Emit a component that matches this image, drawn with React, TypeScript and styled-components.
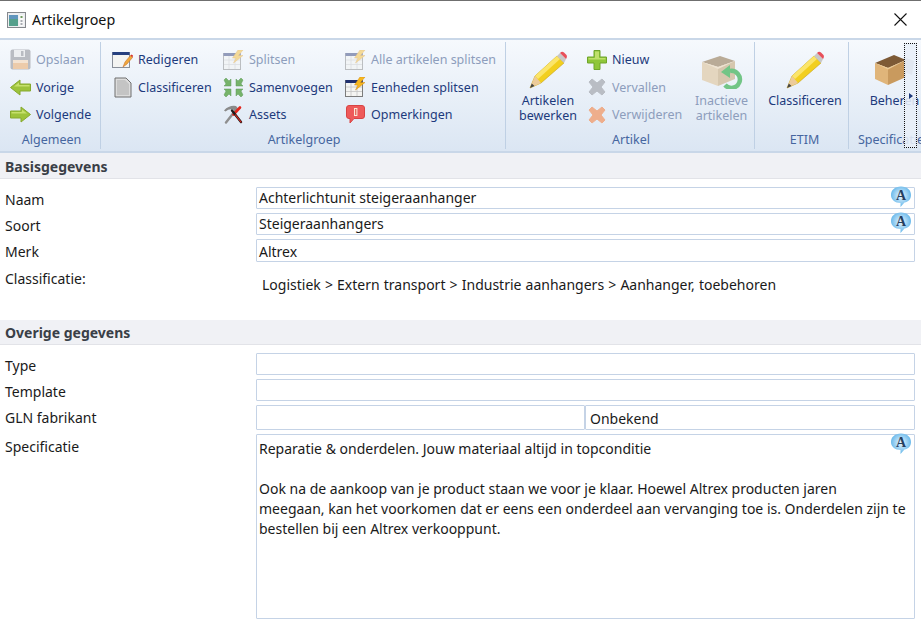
import React from "react"
import styled, { createGlobalStyle } from "styled-components"

const Global = createGlobalStyle`
    html, body { margin: 0; padding: 0; background: #fff; }
    body { font-family: "Noto Sans", "Open Sans", "Liberation Sans", sans-serif; overflow: hidden; }
`

const Window = styled.div`
    width: 921px;
    height: 620px;
    display: flex;
    flex-direction: column;
    overflow: hidden;
    background: #fff;
    border-top: 1px solid #6f6f6f;
    box-sizing: border-box;
`
const TitleBar = styled.div`
    height: 37px;
    flex: none;
    display: flex;
    align-items: center;
    padding: 0 14px 0 7px;
    gap: 6px;
    color: #111;
    font-size: 14.3px;
`
const TitleText = styled.span`
    flex: 1;
`
const Ribbon = styled.div`
    position: relative;
    height: 115px;
    flex: none;
    box-sizing: border-box;
    display: flex;
    gap: 2px;
    padding: 2px 0 2px 3px;
    overflow: hidden;
    border-top: 2px solid #c9d7e8;
    border-bottom: 2px solid #c9d7e8;
    background: linear-gradient(#f6f9fd, #dbe6f3);
`
const Group = styled.div<{ $w: number }>`
    width: ${p => p.$w}px;
    flex: none;
    display: flex;
    flex-direction: column;
    border-right: 1px solid #bfd0e4;
    box-sizing: border-box;
`
const GroupBody = styled.div`
    height: 89px;
    flex: none;
    display: flex;
    padding-top: 4px;
    box-sizing: border-box;
`
const GroupLabel = styled.div<{ $shift?: number }>`
    height: 18px;
    line-height: 18px;
    padding-left: ${p => p.$shift ?? 0}px;
    text-align: center;
    font-size: 12.5px;
    color: #46669f;
    white-space: nowrap;
`
const Column = styled.div<{ $w: number; $left?: number }>`
    width: ${p => p.$w}px;
    margin-left: ${p => p.$left ?? 0}px;
    flex: none;
    display: flex;
    flex-direction: column;
`
const SmallButton = styled.div<{ $off?: boolean }>`
    height: 27.5px;
    display: grid;
    grid-template-columns: 21px auto;
    justify-items: start;
    align-items: center;
    column-gap: 5px;
    font-size: 12.5px;
    white-space: nowrap;
    color: ${p => (p.$off ? "#8d9dbc" : "#1d3a7c")};
    svg { justify-self: center; }
`
const LargeButton = styled.div<{ $w: number; $left: number; $off?: boolean }>`
    width: ${p => p.$w}px;
    margin-left: ${p => p.$left}px;
    flex: none;
    display: flex;
    flex-direction: column;
    align-items: center;
    font-size: 12.5px;
    line-height: 15px;
    text-align: center;
    white-space: nowrap;
    color: ${p => (p.$off ? "#8d9dbc" : "#1d3a7c")};
`
const LargeIcon = styled.div`
    height: 47px;
    flex: none;
    display: flex;
    align-items: center;
    justify-content: center;
`
const OverflowGrip = styled.div`
    position: absolute;
    top: 3px;
    right: 4px;
    width: 13px;
    height: 105px;
    box-sizing: border-box;
    border: 1px dotted #111;
    background: rgba(232, 239, 248, 0.88);
    display: flex;
    align-items: center;
    justify-content: center;
`
const GripArrow = styled.div`
    width: 0;
    height: 0;
    border-top: 3px solid transparent;
    border-bottom: 3px solid transparent;
    border-left: 4px solid #1d3a7c;
    margin-left: 1px;
`
const SectionHeader = styled.div<{ $h: number }>`
    flex: none;
    height: ${p => p.$h}px;
    line-height: ${p => p.$h + 1}px;
    box-sizing: border-box;
    padding-left: 5px;
    font-size: 14px;
    font-weight: 700;
    color: #3a3f47;
    background: #f0f1f5;
    border-bottom: 1px solid #e2e3e8;
`
const Form = styled.div<{ $h: number }>`
    flex: none;
    height: ${p => p.$h}px;
    box-sizing: border-box;
    padding: 8px 6px 0 5px;
    display: grid;
    grid-template-columns: 251px 1fr;
    align-content: start;
    row-gap: 4px;
    font-size: 14px;
    color: #1a1a1a;
`
const Label = styled.div`
    height: 22px;
    line-height: 26px;
`
const Field = styled.div<{ $h?: number }>`
    position: relative;
    height: ${p => p.$h ?? 22}px;
    line-height: ${p => (p.$h ?? 22) - 2}px;
    box-sizing: border-box;
    border: 1px solid #c5d3e6;
    border-radius: 1px;
    padding: 0 2px;
    white-space: nowrap;
`
const MerkField = styled(Field)`
    line-height: 23px;
`
const SplitField = styled.div`
    display: grid;
    grid-template-columns: 329px 1fr;
`
const UnknownField = styled(Field)`
    padding-left: 4px;
    line-height: 25px;
`
const Classification = styled.div`
    padding: 8px 0 0 6px;
    line-height: 22px;
    height: 30px;
    word-spacing: 0.5px;
`
const MemoField = styled(Field)`
    white-space: normal;
    line-height: 20px;
    padding: 4px 2px;
`
const MemoLine = styled.div`
    min-height: 20px;
    white-space: nowrap;
`
const Translate = styled.div`
    position: absolute;
    top: -2px;
    right: 2px;
    width: 22px;
    height: 22px;
`
const CloseButton = styled.svg`
    width: 13px;
    height: 13px;
    display: block;
`

const FloppyIcon = () => (
    <svg width="21" height="21" viewBox="0 0 21 21">
        <rect x="0.5" y="0.5" width="20" height="20" rx="2" fill="#b9bcc2" />
        <rect x="4" y="1" width="11" height="7" fill="#eceef0" />
        <rect x="11" y="2" width="2.5" height="5" fill="#b9bcc2" />
        <rect x="3" y="11" width="15" height="9" fill="#eccbaa" />
        <rect x="3" y="11" width="15" height="3" fill="#f3e3d2" />
    </svg>
)
const ArrowIcon = ({ dir }: { dir: "left" | "right" }) => (
    <svg width="21" height="17" viewBox="0 0 21 17" style={dir === "left" ? { transform: "scaleX(-1)" } : undefined}>
        <path d="M0.5 5 H11 V1 L20.5 8.5 L11 16 V12 H0.5 Z" fill="#9dc33b" stroke="#86a92e" strokeWidth="1" strokeLinejoin="round" />
        <path d="M1.5 6 H12 V3.5 L17 7.5 H1.5 Z" fill="#c6e06c" />
    </svg>
)
const FormIcon = () => (
    <svg width="21" height="19" viewBox="0 0 21 19">
        <rect x="0.5" y="2.5" width="17" height="15" fill="#f4f4f2" stroke="#8a8f99" />
        <rect x="0.5" y="2" width="17" height="3" fill="#27407f" />
        <path d="M11 17 L13 12 L18.5 5.5 L20.5 7.5 L15 14 Z" fill="#f0a83c" stroke="#c9722a" strokeWidth="0.6" />
        <path d="M18.5 5.5 L20.5 7.5 L21 5.5 L19.5 4.5 Z" fill="#d8352e" />
    </svg>
)
const PageIcon = () => (
    <svg width="18" height="21" viewBox="0 0 18 21">
        <path d="M1 1 H12 L17 6 V20 H1 Z" fill="#dcdcdc" stroke="#6f6f6f" />
        <path d="M3 3 H11 L15 7 V18 H3 Z" fill="#c4c4c4" />
    </svg>
)
const SplitIcon = ({ off }: { off?: boolean }) => (
    <svg width="21" height="20" viewBox="0 0 21 20" opacity={off ? 0.45 : 1}>
        <rect x="0.5" y="3.5" width="17" height="16" fill="#f4f4f2" stroke="#7c7c7c" />
        <rect x="0.5" y="3" width="17" height="3" fill="#1f2f6e" />
        <path d="M1 10 H17 M1 14.5 H17 M6 6 V19 M12 6 V19" stroke="#c4c4c4" strokeWidth="0.8" />
        <path d="M15 0 L9.5 8 H13 L10.5 13 L20 5.5 H15.5 L20 0 Z" fill="#f6b71e" stroke="#d98d10" strokeWidth="0.5" />
    </svg>
)
const MergeIcon = () => (
    <svg width="21" height="21" viewBox="0 0 21 21" fill="#76b36a" stroke="#5c9a58" strokeWidth="0.5">
        <path d="M1 3 L3 1 L6 4 L8 2 V9 H1 L3 7 Z" />
        <path d="M20 3 L18 1 L15 4 L13 2 V9 H20 L18 7 Z" />
        <path d="M1 18 L3 20 L6 17 L8 19 V12 H1 L3 14 Z" />
        <path d="M20 18 L18 20 L15 17 L13 19 V12 H20 L18 14 Z" />
    </svg>
)
const ToolsIcon = () => (
    <svg width="21" height="19" viewBox="0 0 21 19">
        <path d="M3 17.5 L12 6" stroke="#8f8f8f" strokeWidth="2.4" strokeLinecap="round" />
        <path d="M1 5.5 Q6 0 13 1 L15.5 4 L13 7 L10 4.5 Q6 3.5 2.5 6.5 Z" fill="#8a8a8a" />
        <path d="M17 2.5 L10.5 9.5" stroke="#e2261c" strokeWidth="2.6" strokeLinecap="round" />
        <path d="M9 5.5 L18 17" stroke="#1c1c1c" strokeWidth="2.4" strokeLinecap="round" />
        <path d="M12.5 10 L18 17" stroke="#e2261c" strokeWidth="1.2" strokeLinecap="round" />
    </svg>
)
const NoteIcon = () => (
    <svg width="19" height="20" viewBox="0 0 19 20">
        <path d="M3 0.5 H16 Q18.5 0.5 18.5 3 V11 Q18.5 13.5 16 13.5 H8 L4 18 V13.5 H3 Q0.5 13.5 0.5 11 V3 Q0.5 0.5 3 0.5 Z" fill="#ee5a5a" stroke="#d84444" />
        <rect x="8" y="3" width="3.4" height="8" fill="#fbe7d8" />
        <rect x="9" y="4" width="1.4" height="6" fill="#e56a5a" />
    </svg>
)
const PlusIcon = () => (
    <svg width="20" height="20" viewBox="0 0 20 20">
        <path d="M7 0.5 H13 V7 H19.5 V13 H13 V19.5 H7 V13 H0.5 V7 H7 Z" fill="#8fc63a" stroke="#6fa52a" strokeLinejoin="round" />
        <path d="M8 1.5 H12 V8 H18.5 V9.5 H1.5 V8 H8 Z" fill="#bfe06a" />
    </svg>
)
const CrossIcon = ({ color }: { color: string }) => (
    <svg width="18" height="18" viewBox="0 0 18 18">
        <path d="M4 1 L9 5 L14 1 L17 4 L13 9 L17 14 L14 17 L9 13 L4 17 L1 14 L5 9 L1 4 Z" fill={color} stroke={color} strokeWidth="1" strokeLinejoin="round" />
    </svg>
)
const PencilIcon = () => (
    <svg width="38" height="38" viewBox="0 0 38 38">
        <path d="M1 37 L6 25 L28 5 L35 12 L12 32 Z" fill="#f2cf1e" stroke="#c8a315" strokeWidth="0.6" />
        <path d="M6 25 L28 5 L31 8 L9 28 Z" fill="#fbe56a" />
        <path d="M1 37 L6 25 L12 32 Z" fill="#eccb9a" />
        <path d="M1 37 L2.8 32.5 L5.5 35 Z" fill="#444" />
        <path d="M28 5 L31 2 L37 8 L35 12 Z" fill="#c8c8c8" />
        <path d="M31 2 Q33 0 35 1.5 L37.5 4 Q38.5 6 37 8 Z" fill="#e8505a" />
    </svg>
)
const InactiveBoxIcon = () => (
    <svg width="42" height="38" viewBox="0 0 42 38">
        <path d="M1 11 L19 5 L34 10 L17 16 Z" fill="#b9ab97" />
        <path d="M1 11 L17 16 L17 35 L1 29 Z" fill="#e4d6bf" />
        <path d="M17 16 L34 10 L34 28 L17 35 Z" fill="#d6c7ae" />
        <path d="M1 11 L17 16 L34 10 L17 18 Z" fill="#efe4d2" />
        <g fill="none" stroke="#72c586" strokeWidth="4.5">
            <path d="M29 20 A8.5 8.5 0 1 1 24 34" />
        </g>
        <path d="M20 21 L29 14 L29 27 Z" fill="#72c586" />
    </svg>
)
const BoxIcon = () => (
    <svg width="42" height="38" viewBox="0 0 42 38">
        <path d="M30 6 L40 10 L38 24 L28 20 Z" fill="#a9adb2" />
        <path d="M1 12 L20 4 L32 9 L14 17 Z" fill="#7d5a36" />
        <path d="M1 12 L14 17 L14 34 L1 28 Z" fill="#e0b57a" />
        <path d="M14 17 L32 9 L32 26 L14 34 Z" fill="#c99a5e" />
        <path d="M1 12 L14 17 L32 9 L14 18.5 Z" fill="#eccb98" />
    </svg>
)
const TranslateIcon = () => (
    <Translate>
        <svg width="22" height="22" viewBox="0 0 22 22">
            <defs>
                <radialGradient id="bubble" cx="50%" cy="45%" r="58%">
                    <stop offset="0%" stopColor="#eef8ff" />
                    <stop offset="100%" stopColor="#56b0e8" />
                </radialGradient>
            </defs>
            <path d="M11 0.5 C17 0.5 21 4 21 9 C21 13.5 18 16 14.5 16.5 L10.5 21 L10.5 17 C5 17 1 13.5 1 9 C1 4 5 0.5 11 0.5 Z" fill="url(#bubble)" />
            <text x="11" y="14" textAnchor="middle" fontFamily="Liberation Serif, serif" fontWeight="700" fontSize="14" fill="#27405f">A</text>
        </svg>
    </Translate>
)
const AppIcon = () => (
    <svg width="19" height="16" viewBox="0 0 19 16">
        <rect x="0.5" y="0.5" width="18" height="15" fill="#eceef0" stroke="#85888d" />
        <rect x="2" y="3" width="9" height="11" fill="#55a08c" />
        <rect x="2" y="3" width="9" height="4" fill="#5f95bd" />
        <rect x="12.5" y="3" width="4" height="11" fill="#fafafa" />
        <rect x="13.5" y="4" width="2" height="2" fill="#6f9a5e" />
        <rect x="13.5" y="8" width="2" height="2" fill="#a8acb2" />
        <rect x="13.5" y="11" width="2" height="2" fill="#a8acb2" />
    </svg>
)

const App: React.FC = () => {
    return (
        <Window>
            <Global />
            <TitleBar>
                <AppIcon />
                <TitleText>Artikelgroep</TitleText>
                <CloseButton viewBox="0 0 13 13">
                    <path d="M0.5 0.5 L12.5 12.5 M12.5 0.5 L0.5 12.5" stroke="#111" strokeWidth="1.1" />
                </CloseButton>
            </TitleBar>
            <Ribbon>
                <Group $w={98}>
                    <GroupBody>
                        <Column $w={90} $left={7}>
                            <SmallButton $off><FloppyIcon />Opslaan</SmallButton>
                            <SmallButton><ArrowIcon dir="left" />Vorige</SmallButton>
                            <SmallButton><ArrowIcon dir="right" />Volgende</SmallButton>
                        </Column>
                    </GroupBody>
                    <GroupLabel>Algemeen</GroupLabel>
                </Group>
                <Group $w={403}>
                    <GroupBody>
                        <Column $w={111} $left={9}>
                            <SmallButton><FormIcon />Redigeren</SmallButton>
                            <SmallButton><PageIcon />Classificeren</SmallButton>
                        </Column>
                        <Column $w={122}>
                            <SmallButton $off><SplitIcon off />Splitsen</SmallButton>
                            <SmallButton><MergeIcon />Samenvoegen</SmallButton>
                            <SmallButton><ToolsIcon />Assets</SmallButton>
                        </Column>
                        <Column $w={155}>
                            <SmallButton $off><SplitIcon off />Alle artikelen splitsen</SmallButton>
                            <SmallButton><SplitIcon />Eenheden splitsen</SmallButton>
                            <SmallButton><NoteIcon />Opmerkingen</SmallButton>
                        </Column>
                    </GroupBody>
                    <GroupLabel>Artikelgroep</GroupLabel>
                </Group>
                <Group $w={247}>
                    <GroupBody>
                        <LargeButton $w={66} $left={7}><LargeIcon><PencilIcon /></LargeIcon>Artikelen<br />bewerken</LargeButton>
                        <Column $w={108} $left={5}>
                            <SmallButton><PlusIcon />Nieuw</SmallButton>
                            <SmallButton $off><CrossIcon color="#b9bdc4" />Vervallen</SmallButton>
                            <SmallButton $off><CrossIcon color="#eeae8c" />Verwijderen</SmallButton>
                        </Column>
                        <LargeButton $w={55} $left={0} $off><LargeIcon><InactiveBoxIcon /></LargeIcon>Inactieve<br />artikelen</LargeButton>
                    </GroupBody>
                    <GroupLabel>Artikel</GroupLabel>
                </Group>
                <Group $w={92}>
                    <GroupBody>
                        <LargeButton $w={92} $left={2}><LargeIcon><PencilIcon /></LargeIcon>Classificeren</LargeButton>
                    </GroupBody>
                    <GroupLabel $shift={4}>ETIM</GroupLabel>
                </Group>
                <Group $w={87}>
                    <GroupBody>
                        <LargeButton $w={87} $left={0}><LargeIcon><BoxIcon /></LargeIcon>Beheren</LargeButton>
                    </GroupBody>
                    <GroupLabel>Specificaties</GroupLabel>
                </Group>
                <OverflowGrip><GripArrow /></OverflowGrip>
            </Ribbon>
            <SectionHeader $h={26}>Basisgegevens</SectionHeader>
            <Form $h={141}>
                <Label>Naam</Label>
                <Field>Achterlichtunit steigeraanhanger<TranslateIcon /></Field>
                <Label>Soort</Label>
                <Field>Steigeraanhangers<TranslateIcon /></Field>
                <Label>Merk</Label>
                <MerkField $h={23}>Altrex</MerkField>
                <Label>Classificatie:</Label>
                <Classification>Logistiek &gt; Extern transport &gt; Industrie aanhangers &gt; Aanhanger, toebehoren</Classification>
            </Form>
            <SectionHeader $h={25}>Overige gegevens</SectionHeader>
            <Form $h={275}>
                <Label>Type</Label>
                <Field />
                <Label>Template</Label>
                <Field />
                <Label>GLN fabrikant</Label>
                <SplitField>
                    <Field $h={25} />
                    <UnknownField $h={25}>Onbekend</UnknownField>
                </SplitField>
                <Label>Specificatie</Label>
                <MemoField $h={185}>
                    <MemoLine>Reparatie &amp; onderdelen. Jouw materiaal altijd in topconditie</MemoLine>
                    <MemoLine />
                    <MemoLine>Ook na de aankoop van je product staan we voor je klaar. Hoewel Altrex producten jaren</MemoLine>
                    <MemoLine>meegaan, kan het voorkomen dat er eens een onderdeel aan vervanging toe is. Onderdelen zijn te</MemoLine>
                    <MemoLine>bestellen bij een Altrex verkooppunt.</MemoLine>
                    <TranslateIcon />
                </MemoField>
            </Form>
        </Window>
    )
}

export default App
